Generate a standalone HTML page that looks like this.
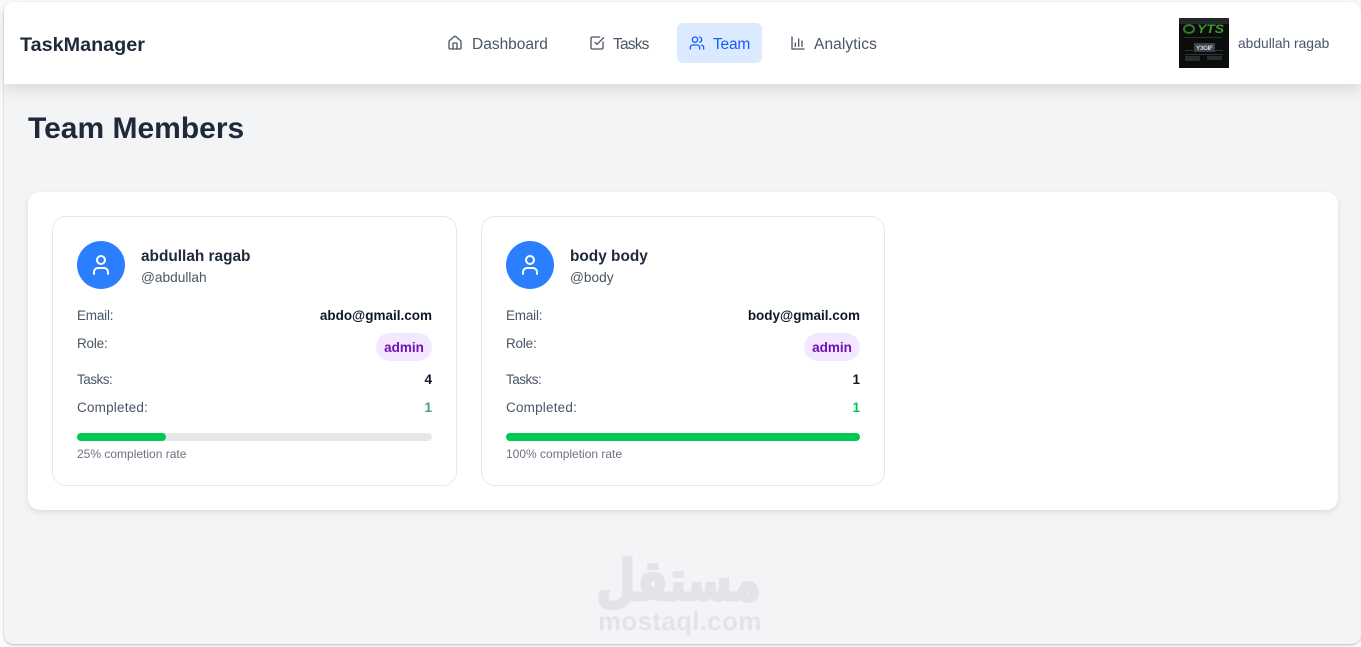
<!DOCTYPE html>
<html><head><meta charset="utf-8"><title>TaskManager</title>
<style>
*{box-sizing:border-box;margin:0;padding:0}
html,body{width:1361px;height:647px;overflow:hidden;background:#fafafa;font-family:"Liberation Sans",sans-serif}
.a{position:absolute;white-space:nowrap}
#frame{position:absolute;left:4px;top:2px;width:1357px;height:642px;background:#f3f4f6;border-radius:10px;box-shadow:0 1px 2px rgba(0,0,0,.25);overflow:hidden}
#nav{position:absolute;left:4px;top:2px;width:1357px;height:82px;background:#fff;border-radius:10px 10px 0 0;box-shadow:0 6px 14px rgba(0,0,0,.10)}
.n{font-size:15.5px;color:#4a5565;top:36px;line-height:18px}
svg.i{position:absolute;fill:none;stroke-width:2;stroke-linecap:round;stroke-linejoin:round}
#panel{position:absolute;left:28px;top:192px;width:1310px;height:318px;background:#fff;border-radius:12px;box-shadow:0 2px 6px rgba(0,0,0,.10)}
.card{position:absolute;top:216px;height:270px;background:#fff;border:1px solid #e5e7eb;border-radius:14px}
.l{font-size:13.5px;color:#4a5565;line-height:16px}
.v{font-size:13.5px;font-weight:bold;color:#101828;line-height:16px}
.em{letter-spacing:-.2px}.ta{letter-spacing:-.5px}.co{letter-spacing:.2px}.ro{letter-spacing:-.2px}
.rate{font-size:12px;color:#6a7282;line-height:15px}
</style></head><body>
<div id="frame"></div>
<div id="nav"></div>
<div class="a" style="left:20px;top:34px;font-size:19.8px;font-weight:bold;color:#1e2939;line-height:22px">TaskManager</div>

<svg class="i" style="left:447px;top:35px" width="16" height="16" viewBox="0 0 24 24" stroke="#4a5565"><path d="M15 21v-8a1 1 0 0 0-1-1h-4a1 1 0 0 0-1 1v8"/><path d="M3 10a2 2 0 0 1 .7-1.5l7-6a2 2 0 0 1 2.6 0l7 6A2 2 0 0 1 21 10v9a2 2 0 0 1-2 2H5a2 2 0 0 1-2-2z"/></svg>
<div class="a n" style="left:472px">Dashboard</div>
<svg class="i" style="left:589px;top:35px" width="16" height="16" viewBox="0 0 24 24" stroke="#4a5565"><path d="M21 10.5V19a2 2 0 0 1-2 2H5a2 2 0 0 1-2-2V5a2 2 0 0 1 2-2h11"/><path d="m9 11 3 3L22 4"/></svg>
<div class="a n" style="left:613px;letter-spacing:-.8px">Tasks</div>
<div class="a" style="left:677px;top:23px;width:85px;height:40px;background:#dbeafe;border-radius:6px"></div>
<svg class="i" style="left:689px;top:35px" width="16" height="16" viewBox="0 0 24 24" stroke="#155dfc"><path d="M16 21v-2a4 4 0 0 0-4-4H6a4 4 0 0 0-4 4v2"/><circle cx="9" cy="7" r="4"/><path d="M22 21v-2a4 4 0 0 0-3-3.87"/><path d="M16 3.13a4 4 0 0 1 0 7.75"/></svg>
<div class="a n" style="left:713px;color:#155dfc;letter-spacing:-.2px">Team</div>
<svg class="i" style="left:790px;top:35px" width="16" height="16" viewBox="0 0 24 24" stroke="#4a5565"><path d="M3 3v18h18"/><path d="M8 17v-5"/><path d="M13 17V6"/><path d="M18 17v-8"/></svg>
<div class="a n" style="left:814px;letter-spacing:.1px">Analytics</div>

<svg class="a" style="left:1179px;top:18px" width="50" height="50" viewBox="0 0 50 50">
<rect width="50" height="50" fill="#0b0d0c"/>
<rect width="50" height="6" fill="#23272a"/>
<ellipse cx="10" cy="11" rx="5" ry="4" fill="none" stroke="#2f7d22" stroke-width="2"/>
<text x="18" y="15" font-family="Liberation Sans" font-weight="bold" font-style="italic" font-size="12" fill="#3c9a2a" textLength="27" lengthAdjust="spacingAndGlyphs">YTS</text>
<rect x="5" y="19" width="38" height="1" fill="#26352a"/>
<rect x="15" y="25" width="21" height="9" fill="#3d4048"/>
<text x="17" y="32" font-family="Liberation Sans" font-weight="bold" font-size="6.5" fill="#d5d5e0" textLength="17">Y3GIF</text>
<rect x="6" y="32" width="8" height="1" fill="#2c3a2c"/><rect x="36" y="32" width="8" height="1" fill="#2c3a2c"/>
<rect x="6" y="36" width="38" height="1" fill="#2d3a2d"/>
<rect x="6" y="38" width="15" height="5" fill="#2a2e30"/><rect x="28" y="38" width="15" height="4" fill="#2a2e30"/>
</svg>
<div class="a" style="left:1238px;top:36px;font-size:13.8px;color:#4a5565;line-height:16px">abdullah ragab</div>

<div class="a" style="left:28px;top:111px;font-size:30px;font-weight:bold;color:#1e2939;line-height:36px">Team Members</div>

<div id="panel"></div>

<!-- Card 1 -->
<div class="card" style="left:52px;width:405px"></div>
<div class="a" style="left:77px;top:241px;width:48px;height:48px;border-radius:50%;background:#2b7fff"></div>
<svg class="i" style="left:89px;top:253px" width="24" height="24" viewBox="0 0 24 24" stroke="#fff"><path d="M19 21v-2a4 4 0 0 0-4-4H9a4 4 0 0 0-4 4v2"/><circle cx="12" cy="7" r="4"/></svg>
<div class="a" style="left:141px;top:247px;font-size:15.4px;font-weight:bold;color:#1e2939;line-height:19px">abdullah ragab</div>
<div class="a" style="left:141px;top:270px;font-size:13.7px;color:#4a5565;line-height:16px">@abdullah</div>
<div class="a l em" style="left:77px;top:308px">Email:</div>
<div class="a v" style="right:929px;top:308px">abdo@gmail.com</div>
<div class="a l ro" style="left:77px;top:336px">Role:</div>
<div class="a" style="left:376px;top:333px;width:56px;height:28px;border-radius:14px;background:#f3e8ff;color:#6e11b0;font-size:13.5px;font-weight:bold;text-align:center;line-height:29px">admin</div>
<div class="a l ta" style="left:77px;top:372px">Tasks:</div>
<div class="a v" style="right:929px;top:372px">4</div>
<div class="a l co" style="left:77px;top:400px">Completed:</div>
<div class="a v" style="right:929px;top:400px;color:#4f9a6e">1</div>
<div class="a" style="left:77px;top:433px;width:355px;height:8px;border-radius:4px;background:#e5e7eb"></div>
<div class="a" style="left:77px;top:433px;width:89px;height:8px;border-radius:4px;background:#00c950"></div>
<div class="a rate" style="left:77px;top:447px">25% completion rate</div>

<!-- Card 2 -->
<div class="card" style="left:481px;width:404px"></div>
<div class="a" style="left:506px;top:241px;width:48px;height:48px;border-radius:50%;background:#2b7fff"></div>
<svg class="i" style="left:518px;top:253px" width="24" height="24" viewBox="0 0 24 24" stroke="#fff"><path d="M19 21v-2a4 4 0 0 0-4-4H9a4 4 0 0 0-4 4v2"/><circle cx="12" cy="7" r="4"/></svg>
<div class="a" style="left:570px;top:247px;font-size:15.4px;font-weight:bold;color:#1e2939;line-height:19px">body body</div>
<div class="a" style="left:570px;top:270px;font-size:13.7px;color:#4a5565;line-height:16px">@body</div>
<div class="a l em" style="left:506px;top:308px">Email:</div>
<div class="a v" style="right:501px;top:308px">body@gmail.com</div>
<div class="a l ro" style="left:506px;top:336px">Role:</div>
<div class="a" style="left:804px;top:333px;width:56px;height:28px;border-radius:14px;background:#f3e8ff;color:#6e11b0;font-size:13.5px;font-weight:bold;text-align:center;line-height:29px">admin</div>
<div class="a l ta" style="left:506px;top:372px">Tasks:</div>
<div class="a v" style="right:501px;top:372px">1</div>
<div class="a l co" style="left:506px;top:400px">Completed:</div>
<div class="a v" style="right:501px;top:400px;color:#00c950">1</div>
<div class="a" style="left:506px;top:433px;width:354px;height:8px;border-radius:4px;background:#00c950"></div>
<div class="a rate" style="left:506px;top:447px">100% completion rate</div>

<!-- Watermark -->
<div class="a" dir="rtl" style="left:590px;top:546px;width:180px;text-align:center;font-family:'DejaVu Sans',sans-serif;font-weight:bold;font-size:50px;line-height:70px;color:#e3e4e7;-webkit-text-stroke:2.5px #e3e4e7;transform:scale(.9,1.12)">مستقل</div>
<div class="a" style="left:598px;top:606px;font-size:26px;font-weight:bold;color:#e3e4e7;line-height:30px;letter-spacing:.3px">mostaql.com</div>
</body></html>
